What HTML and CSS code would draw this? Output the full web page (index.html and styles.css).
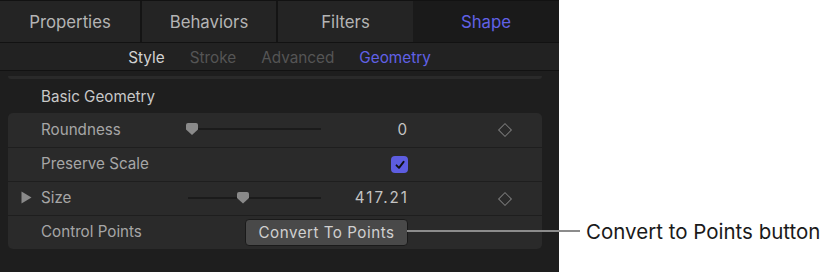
FILE: index.html
```html
<!DOCTYPE html>
<html lang="en">
<head>
    <meta charset="UTF-8">
    <meta name="viewport" content="width=device-width, initial-scale=1.0">
    <title>Shape Inspector - Geometry</title>
    <link rel="stylesheet" href="styles.css">
</head>
<body>
    <div class="page">
        <div class="inspector">
            <div class="tabs">
                <div class="tab tab-properties">Properties</div>
                <div class="tab tab-behaviors">Behaviors</div>
                <div class="tab tab-filters">Filters</div>
                <div class="tab tab-shape active">Shape</div>
            </div>
            <div class="subtabs">
                <span class="subtab on">Style</span>
                <span class="subtab">Stroke</span>
                <span class="subtab">Advanced</span>
                <span class="subtab active">Geometry</span>
            </div>
            <div class="group-end"></div>
            <div class="section-title">Basic Geometry</div>
            <div class="group">
                <div class="row">
                    <span class="disclosure"></span>
                    <span class="label">Roundness</span>
                    <div class="slider">
                        <div class="track"></div>
                        <div class="thumb thumb-start"></div>
                    </div>
                    <span class="value">0</span>
                    <span class="keyframe"></span>
                </div>
                <div class="row">
                    <span class="disclosure"></span>
                    <span class="label">Preserve Scale</span>
                    <div class="slider"></div>
                    <span class="value">
                        <span class="checkbox">
                            <svg width="12" height="12" viewBox="0 0 12 12"><path d="M2.5 6.3 L5 8.8 L9.6 2.8" fill="none" stroke="#111" stroke-width="1.9" stroke-linecap="round" stroke-linejoin="round"/></svg>
                        </span>
                    </span>
                </div>
                <div class="row">
                    <span class="disclosure">
                        <svg width="11" height="13" viewBox="0 0 11 13"><path d="M0.5 0.5 L10.5 6.5 L0.5 12.5 Z" fill="#8a8a8a"/></svg>
                    </span>
                    <span class="label">Size</span>
                    <div class="slider">
                        <div class="track"></div>
                        <div class="thumb thumb-size"></div>
                    </div>
                    <span class="value">417.21</span>
                    <span class="keyframe"></span>
                </div>
                <div class="row">
                    <span class="disclosure"></span>
                    <span class="label">Control Points</span>
                    <button class="convert">Convert To Points</button>
                </div>
            </div>
        </div>
        <div class="callout">
            <div class="callout-line"></div>
            <span class="callout-text">Convert to Points button</span>
        </div>
    </div>
</body>
</html>
```

FILE: styles.css
```css
body {
    margin: 0;
    padding: 0;
    background-color: #ffffff;
    font-family: 'Inter', 'Liberation Sans', sans-serif;
}
.page {
    display: flex;
    width: 840px;
    height: 272px;
    position: relative;
}
.inspector {
    width: 559px;
    height: 272px;
    background-color: #1e1e1e;
    flex-shrink: 0;
}
.tabs {
    display: flex;
    height: 41px;
    border-top: 1px solid #121212;
    border-bottom: 1px solid #121212;
}
.tab {
    display: flex;
    align-items: center;
    justify-content: center;
    background-color: #242424;
    color: #b4b4b4;
    font-size: 16.8px;
    border-right: 2px solid #141414;
}
.tab-properties { width: 140px; }
.tab-behaviors { width: 134px; }
.tab-filters { width: 135px; border-right: none; }
.tab-shape { flex: 1; border-right: none; }
.tab.active {
    background-color: #1a1a1a;
    color: #6161e6;
}
.subtabs {
    display: flex;
    justify-content: center;
    align-items: center;
    gap: 25px;
    height: 25px;
    padding-top: 2px;
    background-color: #222222;
    border-bottom: 1px solid #121212;
    font-size: 15.3px;
}
.subtab {
    color: #555555;
}
.subtab.on {
    color: #d2d2d2;
}
.subtab.active {
    color: #6161e6;
}
.group-end {
    height: 3px;
    margin: 5px 17px 0 8px;
    background-color: #2a2a2a;
    border-radius: 0 0 3px 3px;
}
.section-title {
    height: 34px;
    display: flex;
    align-items: center;
    padding-left: 41px;
    color: #c8c8c8;
    font-size: 15.2px;
}
.group {
    margin: 0 17px 0 8px;
    background-color: #2a2a2a;
    border-radius: 5px;
}
.row {
    display: flex;
    align-items: center;
    height: 33px;
    border-top: 1px solid #1e1e1e;
    font-size: 15.2px;
}
.row:first-child {
    border-top: none;
    height: 34px;
}
.disclosure {
    width: 33px;
    display: flex;
    justify-content: flex-end;
    margin-top: -2px;
}
.disclosure svg {
    margin-right: 9px;
}
.label {
    width: 141px;
    color: #a6a6a6;
    margin-top: -2px;
}
.slider {
    position: relative;
    width: 143px;
    height: 14px;
}
.track {
    position: absolute;
    left: 6px;
    right: 4px;
    top: 5px;
    height: 2px;
    background-color: #1b1b1b;
}
.thumb {
    position: absolute;
    top: 0;
    width: 12px;
    height: 12px;
    background-color: #8a8a8a;
    clip-path: polygon(0 0, 100% 0, 100% 55%, 50% 100%, 0 55%);
    border-radius: 2px 2px 0 0;
}
.thumb-start { left: 4px; }
.thumb-size { left: 55px; }
.value {
    width: 84px;
    color: #c4c4c4;
    letter-spacing: 2px;
    display: flex;
    justify-content: flex-end;
    margin-top: -2px;
}
.keyframe {
    width: 10px;
    height: 10px;
    margin-left: 91px;
    border: 1.5px solid #7a7a7a;
    transform: rotate(45deg);
    box-sizing: border-box;
}
.checkbox {
    width: 17px;
    height: 17px;
    border-radius: 4px;
    background-color: #5d5de0;
    display: flex;
    align-items: center;
    justify-content: center;
    margin-top: 2px;
    margin-right: 1px;
}
.convert {
    margin-left: 63px;
    height: 27px;
    width: 163px;
    background-color: #494949;
    border: 1px solid #1a1a1a;
    border-radius: 4px;
    color: #d0d0d0;
    font-family: inherit;
    font-size: 15.2px;
    letter-spacing: 0.5px;
    padding: 0;
}
.callout {
    flex: 1;
    display: flex;
    align-items: center;
    height: 26px;
    margin-top: 218px;
    padding-left: 27px;
}
.callout-line {
    position: absolute;
    left: 407px;
    top: 230px;
    width: 173px;
    height: 2px;
    background-color: #8c8c8c;
}
.callout-text {
    font-size: 20.5px;
    color: #1a1a1a;
    white-space: nowrap;
}
```
